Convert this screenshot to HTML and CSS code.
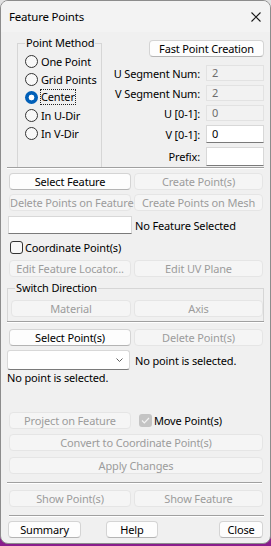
FILE: index.html
```html
<!DOCTYPE html>
<html lang="en">
<head>
    <meta charset="UTF-8">
    <title>Feature Points</title>
    <link rel="stylesheet" href="styles.css">
</head>
<body>
    <div class="window">
        <div class="titlebar">
            <span class="title">Feature Points</span>
            <svg class="close" width="10" height="10" viewBox="0 0 10 10">
                <path d="M0.5 0.5 L9.5 9.5 M9.5 0.5 L0.5 9.5" stroke="#1a1a1a" stroke-width="1.1" fill="none"/>
            </svg>
        </div>
        <div class="content">
            <div class="top">
                <div class="group method">
                    <span class="group-title">Point Method</span>
                    <div class="radio"><span class="dot"></span>One Point</div>
                    <div class="radio"><span class="dot"></span>Grid Points</div>
                    <div class="radio"><span class="dot on"></span><span class="focus">Center</span></div>
                    <div class="radio"><span class="dot"></span>In U-Dir</div>
                    <div class="radio"><span class="dot"></span>In V-Dir</div>
                </div>
                <div class="params">
                    <button class="btn fast">Fast Point Creation</button>
                    <div class="field f1"><span>U Segment Num:</span><div class="inp off">2</div></div>
                    <div class="field f2"><span>V Segment Num:</span><div class="inp off">2</div></div>
                    <div class="field f3"><span>U [0-1]:</span><div class="inp off">0</div></div>
                    <div class="field f4"><span>V [0-1]:</span><div class="inp on tall">0</div></div>
                    <div class="field f5"><span>Prefix:</span><div class="inp on taller"></div></div>
                </div>
            </div>
            <div class="sep wide"></div>

            <div class="row r-sel">
                <button class="btn left">Select Feature</button>
                <button class="btn right" disabled>Create Point(s)</button>
            </div>
            <div class="row r-del">
                <button class="btn left" disabled>Delete Points on Feature</button>
                <button class="btn right" disabled>Create Points on Mesh</button>
            </div>
            <div class="row r-feat">
                <div class="textbox"></div>
                <span class="note">No Feature Selected</span>
            </div>
            <div class="check-row">
                <span class="box"></span>Coordinate Point(s)
            </div>
            <div class="row r-edit">
                <button class="btn left" disabled>Edit Feature Locator...</button>
                <button class="btn right" disabled>Edit UV Plane</button>
            </div>

            <div class="group switch">
                <span class="group-title">Switch Direction</span>
                <div class="row">
                    <button class="btn mat" disabled>Material</button>
                    <button class="btn right" disabled>Axis</button>
                </div>
            </div>
            <div class="sep wide"></div>

            <div class="row r-pts">
                <button class="btn left">Select Point(s)</button>
                <button class="btn right" disabled>Delete Point(s)</button>
            </div>
            <div class="row r-combo">
                <div class="combo">
                    <svg width="7" height="4" viewBox="0 0 7 4"><path d="M0.5 0.5 L3.5 3.5 L6.5 0.5" stroke="#606060" fill="none"/></svg>
                </div>
                <span class="note">No point is selected.</span>
            </div>
            <div class="status">No point is selected.</div>

            <div class="row r-proj">
                <button class="btn left" disabled>Project on Feature</button>
                <div class="check-row inline">
                    <span class="box checked">
                        <svg width="9" height="7" viewBox="0 0 9 7"><path d="M1 3.5 L3.3 5.8 L8 1" stroke="#f4f4f4" stroke-width="1.2" fill="none"/></svg>
                    </span>Move Point(s)
                </div>
            </div>
            <button class="btn full conv" disabled>Convert to Coordinate Point(s)</button>
            <button class="btn full apply" disabled>Apply Changes</button>
            <div class="sep short-right"></div>
            <div class="row r-show">
                <button class="btn left" disabled>Show Point(s)</button>
                <button class="btn right" disabled>Show Feature</button>
            </div>
            <div class="sep"></div>
            <div class="footer">
                <button class="btn summary">Summary</button>
                <button class="btn help">Help</button>
                <button class="btn close-btn">Close</button>
            </div>
        </div>
    </div>
</body>
</html>
```

FILE: styles.css
```css
body {
    margin: 0;
    width: 271px;
    height: 546px;
    background: linear-gradient(to bottom, #e2e2e2 0%, #7d88a8 35%, #6a5a9e 70%, #8a1d8c 100%);
    font-family: "Noto Sans", sans-serif;
    font-size: 11px;
    letter-spacing: -0.15px;
    color: #000;
    white-space: nowrap;
}
.window {
    box-sizing: border-box;
    width: 271px;
    height: 544px;
    border: 1px solid #8c8c8c;
    border-radius: 8px;
    background: #f0f0f0;
    overflow: hidden;
}
.titlebar {
    height: 31px;
    display: flex;
    align-items: center;
    padding-left: 8px;
    background: #f3f3f3;
}
.title {
    font-size: 11.5px;
    letter-spacing: -0.2px;
}
.close {
    margin-left: auto;
    margin-right: 9px;
}
.content {
    padding: 0 6px 0 8px;
    display: flex;
    flex-direction: column;
}
.top {
    display: flex;
    height: 135px;
}

/* group boxes */
.group {
    position: relative;
    box-sizing: border-box;
    border: 1px solid #d6d6d6;
}
.group-title {
    position: absolute;
    top: -9px;
    left: 7px;
    padding: 0 1px;
    line-height: 16px;
    background: #f0f0f0;
}
.method {
    margin: 11px 0 0 8px;
    width: 85px;
    height: 124px;
    border-bottom: none;
    padding: 8px 0 0 7px;
}
.radio {
    height: 18px;
    display: flex;
    align-items: center;
    gap: 3px;
}
.dot {
    box-sizing: border-box;
    width: 13px;
    height: 13px;
    border: 1px solid #333;
    border-radius: 50%;
    background: #f8f8f8;
}
.dot.on {
    border: none;
    background: radial-gradient(circle, #fff 0 2.6px, #005fb8 3.2px);
}
.focus {
    outline: 1px dotted #222;
    outline-offset: 0;
    line-height: 14px;
}

.params {
    margin-left: auto;
    display: flex;
    flex-direction: column;
    align-items: flex-end;
}
.field {
    display: flex;
    align-items: center;
    gap: 6px;
    margin-top: 4px;
}
.f1 { margin-top: 8px; }
.inp {
    box-sizing: border-box;
    width: 58px;
    height: 16px;
    padding-left: 5px;
    line-height: 14px;
    border: 1px solid #e2e2e2;
}
.inp.off {
    color: #6d6d6d;
    background: #f2f2f2;
}
.inp.on {
    background: #fff;
    border-color: #d8d8d8;
    border-bottom-color: #7a7a7a;
}
.inp.tall { height: 18px; line-height: 16px; }
.inp.taller { height: 19px; }

/* buttons */
.btn {
    box-sizing: border-box;
    height: 17px;
    padding: 0;
    font: inherit;
    letter-spacing: inherit;
    white-space: nowrap;
    color: #000;
    background: #fdfdfd;
    border: 1px solid #d4d4d4;
    border-bottom-color: #b4b4b4;
    border-radius: 4px;
}
.btn:disabled {
    color: #9c9c9c;
    background: #f5f5f5;
    border-color: #e5e5e5;
}
.fast {
    width: 115px;
    margin-top: 8px;
}
.row {
    display: flex;
    align-items: center;
    gap: 3px;
}
.left { width: 122px; }
.right { width: 129px; }
.full { width: 254px; }

.sep {
    height: 0;
    border-top: 1px solid #a0a0a0;
    border-bottom: 1px solid #fff;
}
.sep.wide { margin-left: -2px; }
.sep.short-right { margin: 8px 2px 0 -2px; }

.r-sel { margin-top: 4px; }
.r-del { margin-top: 4px; }
.r-feat { margin-top: 5px; }
.textbox {
    box-sizing: border-box;
    width: 124px;
    height: 18px;
    margin-left: -1px;
    background: #fff;
    border: 1px solid #d8d8d8;
    border-bottom-color: #7a7a7a;
}
.check-row {
    display: flex;
    align-items: center;
    gap: 2px;
    height: 19px;
    margin-top: 4px;
    padding-left: 1px;
}
.box {
    box-sizing: border-box;
    width: 13px;
    height: 13px;
    border: 1px solid #333;
    border-radius: 3px;
    background: #f8f8f8;
    display: flex;
    align-items: center;
    justify-content: center;
}
.box.checked {
    border: none;
    background: #c4c4c4;
}
.r-edit { margin-top: 3px; }

.switch {
    margin: 11px 0 0 -2px;
    height: 33px;
    border-bottom: none;
    padding: 11px 0 0 3px;
}
.mat { width: 120px; }

.r-pts { margin-top: 6px; }
.r-combo { margin-top: 4px; margin-left: -2px; gap: 5px; }
.combo {
    box-sizing: border-box;
    width: 123px;
    height: 20px;
    background: #fff;
    border: 1px solid #d8d8d8;
    border-bottom-color: #7a7a7a;
    border-radius: 3px;
    display: flex;
    align-items: center;
    justify-content: flex-end;
    padding-right: 6px;
}
.status {
    margin: 1px 0 0 -2px;
    line-height: 14px;
}

.r-proj { margin-top: 26px; gap: 8px; }
.check-row.inline { margin-top: 0; padding-left: 0; }
.conv { margin-top: 4px; }
.apply { margin-top: 6px; }
.r-show { margin-top: 6px; }
.r-show + .sep { margin-top: 8px; }
.footer {
    display: flex;
    margin-top: 4px;
    margin-left: -1px;
}
.summary { width: 73px; }
.help { width: 52px; margin-left: 25px; }
.close-btn { width: 44px; margin-left: 61px; }
```
